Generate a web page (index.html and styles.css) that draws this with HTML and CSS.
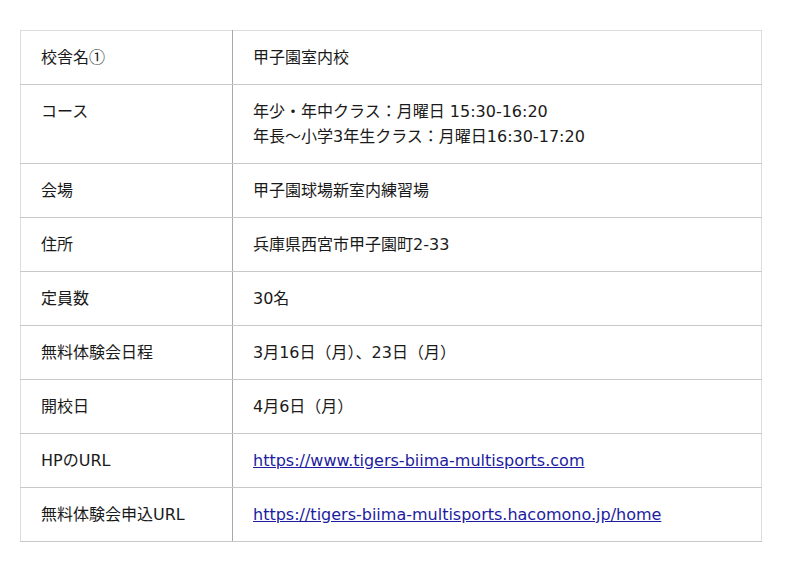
FILE: index.html
```html
<!DOCTYPE html>
<html lang="ja">
<head>
<meta charset="utf-8">
<title>校舎情報</title>
<link rel="stylesheet" href="styles.css">
</head>
<body>
<table class="info">
  <tr><th>校舎名<span class="cjk">①</span></th><td>甲子園室内校</td></tr>
  <tr><th>コース</th><td>年少・年中クラス：月曜日 15:30-16:20<br>年長～小学3年生クラス：月曜日16:30-17:20</td></tr>
  <tr><th>会場</th><td>甲子園球場新室内練習場</td></tr>
  <tr><th>住所</th><td>兵庫県西宮市甲子園町2-33</td></tr>
  <tr><th>定員数</th><td>30名</td></tr>
  <tr><th>無料体験会日程</th><td>3月16日（月）、23日（月）</td></tr>
  <tr><th>開校日</th><td>4月6日（月）</td></tr>
  <tr><th>HPのURL</th><td><a href="#">https://www.tigers-biima-multisports.com</a></td></tr>
  <tr><th>無料体験会申込URL</th><td><a href="#">https://tigers-biima-multisports.hacomono.jp/home</a></td></tr>
</table>
</body>
</html>
```
FILE: styles.css
```css
html, body {
  margin: 0;
  background: #fff;
}
body {
  padding: 30px 20px;
  font-family: "DejaVu Sans", "Noto Sans CJK JP", sans-serif;
  font-size: 16px;
  color: #1a1a1a;
}
.info {
  width: 742px;
  border-collapse: collapse;
  border: 1px solid #dcdcdc;
}
.info th,
.info td {
  padding: 14px 20px;
  line-height: 25px;
  text-align: left;
  vertical-align: top;
  font-weight: normal;
  border-bottom: 1px solid #c8c8c8;
}
.info th {
  width: 171px;
  border-right: 1px solid #a8a8a8;
}
.info .cjk {
  font-family: "Noto Sans CJK JP", sans-serif;
  line-height: 16px;
}
.info a {
  color: #1c1ca0;
  text-decoration: underline;
}
```
